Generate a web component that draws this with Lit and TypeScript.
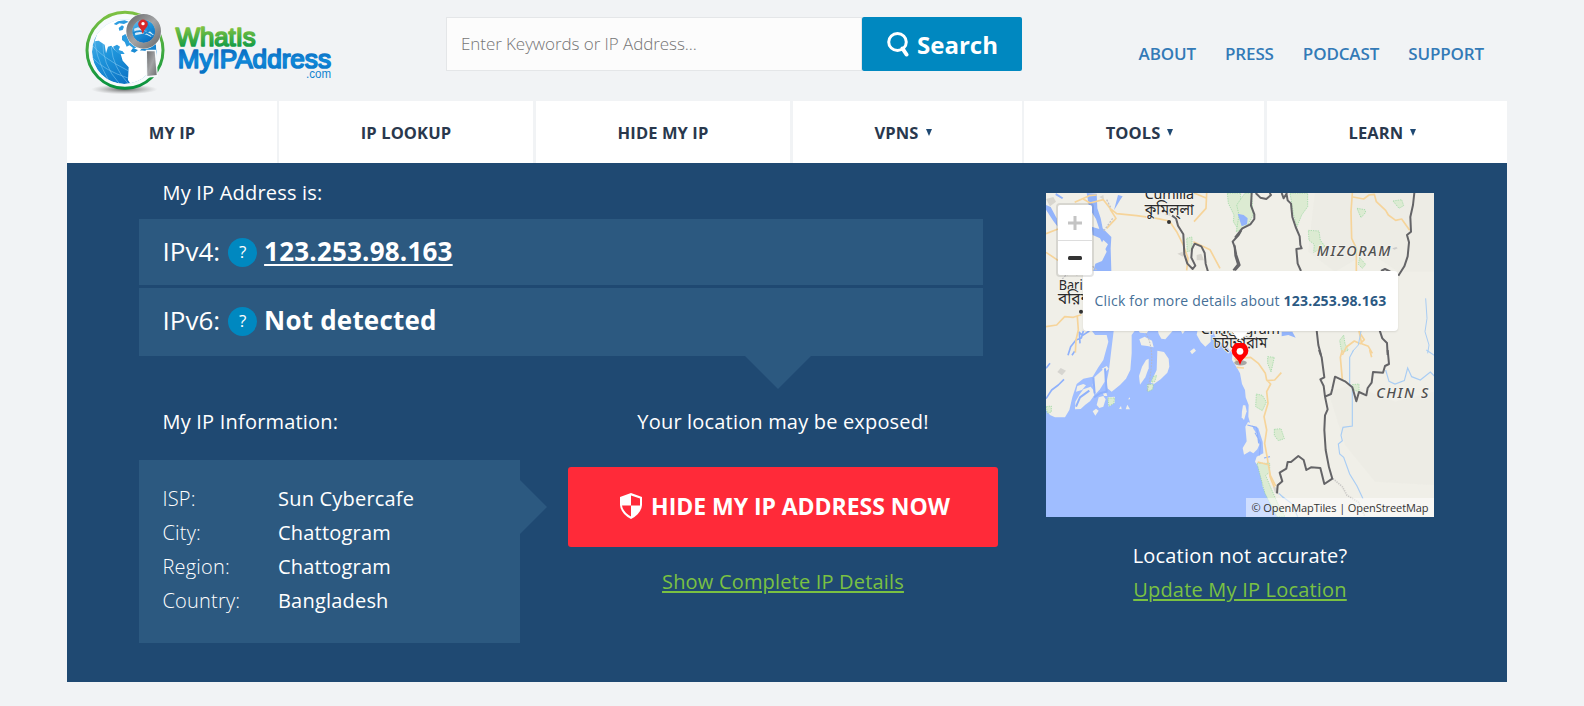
import { LitElement, html, css, svg } from "lit";
import { customElement } from "lit/decorators.js";

@customElement("site-logo")
class SiteLogo extends LitElement {
  static styles = css`
    :host { display: block; }
    .art { display: block; }
    .word { font-family: "Liberation Sans", Arial, sans-serif; stroke-linejoin: round; }
  `;
  render() {
    return html`<svg class="art" width="270" height="95" viewBox="0 0 810 285">
      <defs>
        <linearGradient id="ring" x1="0" y1="0" x2="0" y2="1"><stop offset="0" stop-color="#7dc142"/><stop offset="1" stop-color="#06923f"/></linearGradient>
        <linearGradient id="sea" x1="0" y1="0" x2="0.6" y2="1"><stop offset="0" stop-color="#6fc0ee"/><stop offset=".5" stop-color="#1f96dc"/><stop offset="1" stop-color="#0a6fc2"/></linearGradient>
        <linearGradient id="steel" x1="0" y1="0" x2="1" y2="1"><stop offset="0" stop-color="#6d6e70"/><stop offset=".5" stop-color="#a3a4a6"/><stop offset="1" stop-color="#707173"/></linearGradient>
        <linearGradient id="green" gradientUnits="userSpaceOnUse" x1="0" y1="70" x2="0" y2="130"><stop offset="0" stop-color="#7fc241"/><stop offset="1" stop-color="#0f9a47"/></linearGradient>
        <linearGradient id="blue" gradientUnits="userSpaceOnUse" x1="0" y1="136" x2="0" y2="205"><stop offset="0" stop-color="#0a6cc0"/><stop offset=".5" stop-color="#1288d8"/><stop offset="1" stop-color="#0672c4"/></linearGradient>
        <radialGradient id="shade"><stop offset="0" stop-color="#333" stop-opacity=".75"/><stop offset="1" stop-color="#777" stop-opacity="0"/></radialGradient>
        <clipPath id="disc"><circle cx="139" cy="143" r="97"/></clipPath>
      </defs>
      <ellipse cx="139" cy="256" rx="100" ry="15" fill="url(#shade)"/>
      <circle cx="141" cy="139" r="114" fill="#f6fafc" stroke="url(#ring)" stroke-width="9"/>
      <g clip-path="url(#disc)">
        <circle cx="139" cy="143" r="97" fill="url(#sea)"/>
        <g fill="none" stroke="#8ccdf2" stroke-width="1.6">
          <path d="M40 120Q70 160 150 200M42 160Q80 200 150 222M50 85Q45 150 95 235M75 110Q70 180 125 240M100 130Q105 190 150 238"/>
        </g>
        <path fill="#fff" d="M58 88L76 62L100 47L150 43L190 60L200 125L185 140L165 132L158 142L170 146L180 138L205 141L212 215L178 238L160 244L150 228L152 190L134 170L128 150L112 140L100 125L90 128L84 148L80 122L62 110L50 112Z"/>
        <g fill="#2b9ce0">
          <path d="M107 60L120 52L140 49L152 53L138 60L124 58L115 63ZM122 72L132 64L138 68L134 78L124 80ZM132 96L142 90L150 102L157 122L146 128L140 114L132 108ZM105 128L117 122L126 128L122 138L134 142L140 150L124 150L112 140Z"/>
          <path d="M150 120L162 114L178 128L168 134Z" />
        </g>
      </g>
      <circle cx="197" cy="82" r="53" fill="#f6fafc"/>
      <circle cx="197" cy="82" r="35" fill="url(#sea)"/>
      <path d="M168 74L180 70L200 80L218 82L228 92L218 98L206 92L190 90L172 94Z" fill="#d5ecf9"/>
      <path d="M164 88Q190 70 230 100M178 112Q190 90 226 74M206 50Q212 80 228 90" fill="none" stroke="#1a86d0" stroke-width="5"/>
      <circle cx="197" cy="82" r="43" fill="none" stroke="url(#steel)" stroke-width="18"/>
      <path d="M194 90Q191 76 183 68A14 14 0 1 1 207 68Q198 76 194 90Z" fill="#d8282a"/><circle cx="195" cy="59" r="5" fill="#fff"/>
      <path d="M203 137H234L240 218L204 221Z" fill="#f6fafc"/>
      <path d="M207 142L230 142L236 213L208 216Z" fill="url(#steel)"/>
      <text class="word" x="293" y="127" font-size="75" textLength="240" lengthAdjust="spacingAndGlyphs" fill="url(#green)" stroke="url(#green)" stroke-width="5">WhatIs</text>
      <text class="word" x="299" y="193" font-size="76" textLength="460" lengthAdjust="spacingAndGlyphs" fill="url(#blue)" stroke="url(#blue)" stroke-width="5">MyIPAddress</text>
      <text class="word" x="684" y="222" font-size="36" textLength="75" lengthAdjust="spacingAndGlyphs" fill="#0f83d0">.com</text>
    </svg>`;
  }
}

// The drawing uses three units per screen pixel; each group is shifted to its own sheet origin.
const mapArt = svg`
  <rect width="1164" height="972" fill="#f0efe8"/>
  <g transform="translate(567,-24)" fill="#e9e9e2">
    <path d="M240 24H597V260H490L400 200L300 260L220 200Z" opacity=".5"/>
    <path d="M280 620L350 600L480 650L597 620V900L420 890L330 780Z" opacity=".4"/>
  </g>
  <g transform="translate(-18,351)">
    <path fill="#9fbdff" d="M18 300L30 315L45 322L75 322L88 300L97 262L110 222L130 206L158 200L175 172L190 150L205 95L200 75L165 75L150 55L150 0H520L520 66L530 90L560 110L577 130L576 150L590 172L600 190L606 222L615 240L617 262L626 285L625 320L632 345L655 355L668 395L670 430L650 440L645 455L662 480L668 530L680 555L700 590L722 621H18Z"/>
    <g fill="#f0efe8">
      <path d="M222 55L290 55L275 75L275 130L271 180L258 206L240 225L215 245L202 235L200 215L207 180L214 120Z"/>
      <path d="M105 298L106 275L118 254L130 238L152 230L160 240L163 256L150 274L136 284L122 297Z"/>
      <path d="M163 202L178 188L196 172L194 215L180 238L167 252L158 225Z"/><path d="M170 285L176 262L190 258L197 268L190 290L178 294ZM158 304L168 296L176 302L166 317Z"/>
      <path d="M108 245L112 228L130 222L138 226L126 240ZM185 176L200 168L206 176L196 186ZM188 248L198 246L202 258L192 258Z"/>
      <path d="M203 262L224 260L224 278L206 290Z"/>
      <path d="M300 224L297 198L306 170L318 150L326 146L326 175L316 202Z"/>
      <path d="M352 122L372 126L386 146L388 170L382 188L362 208L342 222L332 218L350 180Z"/>
      <path d="M298 88L314 80L336 92L341 112L322 108L304 106Z"/><path d="M290 55H330L320 70L300 68ZM352 55H405L376 88L364 86L356 72ZM418 55H440L428 72Z"/>
      <path d="M450 124L462 115L468 122L456 133ZM474 55H512L512 95L496 110L482 96L470 74Z"/>
      <path d="M237 296L243 288L245 298ZM257 298L262 284L270 298ZM264 268L270 262V268Z"/>
      <path d="M606 304L609 286L616 286L620 304L612 330L605 322Z"/>
      <path d="M616 350L624 336L634 340L640 356L652 374L658 404L652 418L640 430L630 424L612 434L608 414L620 394Z"/>
    </g>
    <g fill="none" stroke="#8fb1fb" stroke-width="6" stroke-linejoin="round">
      <path d="M18 266L35 240L55 225L72 208M84 136L92 110L108 90L124 84L130 63M18 175L30 160M96 136L104 124M118 66L120 100M148 63L128 76L116 66" stroke-width="5"/>
      <path d="M108 290L120 262L148 242M160 202L164 250M195 175L200 245L180 250L162 262"/>
      <path d="M622 345L650 352L656 400M645 368L662 398L658 436M672 444L690 440" stroke-width="3.5"/>
    </g>
    <path d="M52 186L62 174L78 182L66 196Z" fill="#d6d5d0"/>
    <g fill="#dcebd2" stroke="#8fd598" stroke-width="2" stroke-dasharray="4 3"><path d="M204 264H224L221 280L207 289ZM322 224L340 222L338 238L324 245ZM340 200L350 196L344 215L334 216ZM19 290L34 288L34 306L22 310Z"/></g>
    <path d="M318 70Q340 110 334 170T320 245" fill="none" stroke="#b8b8c2" stroke-width="3" stroke-dasharray="5 4"/>
    <g fill="none" stroke="#f6d49a" stroke-width="5" stroke-linejoin="round">
      <path d="M18 50L50 45L74 20L100 22L124 14M112 20L115 60L108 90L106 128"/>
      <path d="M590 172L612 174M584 145L594 160M610 144L632 142L655 160L676 190L680 210L692 222L680 245L684 280L672 320L680 360L674 400L682 444L690 500L706 540M680 212L704 210L724 188"/>
    </g>
  </g>
  <g transform="translate(-18,-24)">
    <path fill="#93b4fb" d="M140 24L170 26L172 70L182 100L188 130L214 156L212 190L214 258L160 258L166 236L186 228L200 200L190 180L180 160L158 150L155 125L178 132L168 102L148 70ZM18 60L32 66L50 100L52 124L40 108L18 74ZM48 24L70 38L66 42L46 30ZM222 76L240 46L248 34L234 30Z"/>
    <path d="M190 165L204 178L194 196L180 184Z" fill="#f0efe8"/>
    <g fill="#d8d6cf"><path d="M18 42L40 36L48 50L30 64ZM178 36L190 30L192 44ZM412 206L428 200L430 216ZM470 210L484 206L492 226L470 226ZM374 90L388 76L392 92Z"/></g>
    <g fill="none" stroke="#f6d49a" stroke-width="5" stroke-linejoin="round">
      <path d="M130 42L150 54L190 44L210 70L230 86L290 92L350 100L388 108L410 140L430 180L444 220L440 256M18 146L54 132M18 202L54 226M104 52L148 32L170 30M210 72L228 100L200 130M460 170L510 194L540 250M500 24L498 70L462 110M462 24L500 40"/>
    </g>
    <path d="M60 290L76 272L92 264L112 270M158 244L170 256M200 44L212 68M218 100L190 140" fill="none" stroke="#c4c3c5" stroke-width="4" stroke-dasharray="6 4"/>
    <path d="M440 160L456 156L456 196L442 200ZM562 24L602 24V145L580 110L582 90L565 55Z" fill="#dcebd2" stroke="#8fd598" stroke-width="2" stroke-dasharray="4 3"/>
    <path d="M396 92L408 100L414 122L430 148L433 208L442 236L458 252L466 242L454 218L456 192L464 176L484 184L494 204L497 236L504 260M604 136L596 150L578 170L584 186L586 212L594 238L580 256" fill="none" stroke="#646467" stroke-width="6" stroke-linejoin="round"/>
    <circle cx="387" cy="111" r="6" fill="#333"/><circle cx="123" cy="380" r="6" fill="#333"/>
  </g>
  <g transform="translate(567,-24)">
    <g fill="#dcebd2" stroke="#8fd598" stroke-width="2" stroke-dasharray="4 3">
      <path d="M4 140L12 90L5 60L30 24H50L54 90L40 118L22 130ZM165 24H218V65L200 90L186 125L176 90ZM220 136L252 138L256 166L270 184L236 202L238 178L222 166ZM366 70L390 74L392 82L378 98ZM474 48L500 44L506 62L492 70ZM374 218L392 238L382 250L370 238ZM314 466L326 450L330 476L340 496L320 502Z"/>
    </g>
    <path d="M8 86L26 90L38 100L36 118L20 124ZM140 440H172L182 458L160 450L140 454Z" fill="#93b4fb"/>
    <g fill="none" stroke="#f6d49a" stroke-width="5" stroke-linejoin="round">
      <path d="M352 24L348 80L350 160L364 190L364 258M354 36L386 42L402 30L418 28L424 50L452 76L460 90L482 106L500 102L524 136M322 510L334 486L358 468L376 476L388 464L372 440M372 438L380 476L400 484L412 505"/>
    </g>
    <path d="M572 340L576 400L570 440L582 480L578 505M378 438L370 480L352 500" fill="none" stroke="#a9cdf4" stroke-width="3"/>
    <path d="M50 24L48 62L58 88L58 102L46 118L22 130L0 158M-2 180L4 210L14 240L0 256M62 24L76 38L94 42L108 30L104 24M154 24L158 46L168 56L172 96L182 126L194 154L196 180L200 190L184 192L188 236L198 258M140 24L146 40L156 24M538 24L534 60L526 96L528 140L516 150L522 172L518 214L508 244L490 272M438 258L450 252L466 260M245 436L250 480L258 510M434 436L442 460L456 474L458 510" fill="none" stroke="#646467" stroke-width="6" stroke-linejoin="round"/>
    <path d="M472 190L484 186L488 190L478 194Z" fill="#ccc"/>
  </g>
  <g transform="translate(567,471)">
    <g fill="#dcebd2" stroke="#8fd598" stroke-width="2" stroke-dasharray="4 3">
      <path d="M98 20L118 22L108 66L98 40ZM64 132L82 136L94 156L82 182L62 170ZM118 238L138 236L148 266L130 272L118 256ZM352 104L372 102L372 126L354 118ZM66 340L104 340L104 366L92 376L106 410L128 460L150 500H126L90 430Z"/>
    </g>
    <path d="M114 410L126 414L132 434L120 428Z" fill="#d6d5d0"/>
    <path d="M68 336L100 344L106 376L122 408M322 0L316 22L322 88M404 0L410 22" fill="none" stroke="#f6d49a" stroke-width="5"/>
    <path d="M356 0L344 22L344 104L352 110V228L324 232L318 256L322 272L310 282L314 312L326 322L344 372L366 408L384 446M452 60L462 94L480 102L508 92L518 54L530 80L556 90L586 66L598 78M574 0L598 16M132 430L146 444M140 438L172 462L188 500" fill="none" stroke="#a9cdf4" stroke-width="3.5"/>
    <path d="M294 386L322 410L336 436L370 456L390 500" fill="none" stroke="#cbcac7" stroke-width="5" stroke-dasharray="4 3"/>
    <path d="M252 0L260 22L268 82L256 88L266 108L270 140L278 178L270 196L268 240L272 300L282 352L292 386L268 402L256 354L228 352L214 360L206 330L190 318L168 336L158 336L154 356L134 368L142 394L128 406L126 430M270 140L288 132L292 116L300 80L330 94L352 112L364 154L372 126L394 136L398 114L410 98L414 66L444 68L450 48L462 42L458 0" fill="none" stroke="#646467" stroke-width="6" stroke-linejoin="round"/>
  </g>
  <g class="label">
    <text x="296" y="19" textLength="148">Cumilla</text><text x="296" y="65" class="bn" textLength="148" lengthAdjust="spacingAndGlyphs">কুমিল্‌লা</text>
    <text x="38" y="290" textLength="122" lengthAdjust="spacingAndGlyphs">Barisal</text><text x="36" y="333" class="bn">বরিশাল</text>
    <text x="464" y="422" textLength="238">Chattogram</text><text x="502" y="466" class="bn" textLength="162" lengthAdjust="spacingAndGlyphs">চট্‌টগ্‌রাম</text>
    <text class="state" x="812" y="190" textLength="222">MIZORAM</text><text class="state" x="991" y="614" textLength="156">CHIN S</text>
  </g>`;

@customElement("ip-map")
class IpMap extends LitElement {
  static styles = css`
    :host { display: block; position: relative; width: 388px; height: 324px; overflow: hidden; }
    .canvas { display: block; width: 388px; height: 324px; }
    .label { font-family: "Noto Sans", "Noto Sans Bengali", sans-serif; font-size: 43px; fill: #2a2a2a; paint-order: stroke; stroke: #f4f3ee; stroke-width: 5px; }
    .bn { font-size: 46px; }
    .state { font-style: italic; font-weight: 500; font-size: 43px; fill: #505050; }
    .zoom { position: absolute; left: 10px; top: 10px; width: 34px; border: 2px solid rgba(0,0,0,.1); border-radius: 4px; background: #fff; background-clip: padding-box; }
    .key { height: 35px; display: grid; place-items: center; }
    .key + .key { border-top: 1px solid #ddd; height: 34px; }
    .popup { position: absolute; left: 37px; top: 78px; width: 315px; height: 60px; border-radius: 4px; background: #fff; color: #456f97; font-size: 14px; letter-spacing: .2px; line-height: 60px; text-align: center; white-space: nowrap; box-shadow: 0 1px 2px rgba(0,0,0,.1); }
    .popup b { color: #2b5983; }
    .tip { position: absolute; left: 184px; top: 137px; border: 10px solid transparent; border-top-color: #fff; border-bottom: 0; }
    .pin { position: absolute; left: 185px; top: 150px; }
    .credit { position: absolute; right: 0; bottom: 0; width: 188px; height: 19px; background: rgba(255,255,255,.5); color: #333; font: 11px/20px "Open Sans", sans-serif; letter-spacing: -.08px; text-align: center; white-space: nowrap; }
  `;
  render() {
    return html`<svg class="canvas" viewBox="0 0 1164 972">${mapArt}</svg>
      <div class="tip"></div>
      <svg class="pin" width="18" height="23" viewBox="0 0 17 22"><ellipse cx="9" cy="19" rx="6" ry="2.5" fill="#777" opacity=".6"/><path d="M8.5 21Q7.5 17 3 13A8 8 0 1 1 14 13Q9.500 17 8.500 21Z" fill="#f00"/><circle cx="8.500" cy="8" r="3.200" fill="#fff"/></svg>
      <div class="popup">Click for more details about <b>123.253.98.163</b></div>
      <div class="zoom">
        <div class="key"><svg width="14" height="14"><path d="M7 0V14M0 7H14" stroke="#c4c4c4" stroke-width="3"/></svg></div>
        <div class="key"><svg width="14" height="4"><rect width="14" height="4" rx="1.500" fill="#333"/></svg></div>
      </div>
      <div class="credit">© OpenMapTiles | OpenStreetMap</div>`;
  }
}

@customElement("app-root")
class AppRoot extends LitElement {
  static styles = css`
    :host { display: block; height: 706px; overflow: hidden; background: #f1f3f5; font-family: "Open Sans", sans-serif; color: #fff; }
    .page { width: 1440px; margin-left: 67px; }
    .header { height: 101px; display: flex; align-items: flex-start; }
    .logo { margin: 4px 98px 0 11px; }
    .search { display: flex; margin-top: 17px; width: 576px; height: 54px; }
    .field { box-sizing: border-box; width: 416px; height: 54px; padding-left: 14px; border: 1px solid #e4e6e8; background: #fcfcfc; color: #757575; font-size: 17px; letter-spacing: -.07px; font-weight: 300; line-height: 52px; }
    .go { width: 160px; background: #0088c0; border-radius: 2px; font-size: 24px; font-weight: 700; line-height: 53px; display: flex; align-items: center; justify-content: center; gap: 8px; padding-left: 1px; box-sizing: border-box; }
    .links { margin-left: auto; margin-right: 23px; display: flex; gap: 29px; padding-top: 42px; font-size: 17px; letter-spacing: -.13px; font-weight: 600; line-height: 24px; color: #337ab7; }
    .nav { display: grid; grid-template-columns: 212px 257px 257px 231px 243px 240px; height: 62px; }
    .item { background: #fff; border-right: 3px solid #f1f3f5; display: flex; align-items: center; justify-content: center; color: #29384d; font-size: 16.500px; font-weight: 700; letter-spacing: .1px; gap: 7px; }
    .item:first-child, .item:nth-child(4) { border-right-width: 2px; }
    .item:last-child { border-right: 0; }
    .caret { border: 3.500px solid transparent; border-top: 7px solid #1f4973; border-bottom: 0; margin-right: 9px; }
    .panel { height: 519px; background: #1f4972; display: grid; grid-template-columns: 907px 388px; padding-left: 72px; box-sizing: border-box; }
    .title { padding-left: 23.500px; height: 56px; line-height: 59px; font-size: 20px; letter-spacing: .2px; }
    .row { width: 844px; height: 66px; padding: 0 0 2px 23.500px; box-sizing: border-box; background: #2c5980; margin-bottom: 3px; display: flex; align-items: center; font-size: 26px; line-height: 62px; }
    .row.last { height: 68px; margin: 0; padding-bottom: 4px; }
    .row b { font-weight: 700; letter-spacing: .2px; }
    .row u { text-decoration-thickness: 2px; text-underline-offset: 3px; }
    .help { width: 29px; height: 29px; border-radius: 50%; background: #0088c0; font-size: 17px; font-weight: 500; line-height: 28px; text-align: center; margin: 3px 7px 0 8px; }
    .down { width: 0; margin-left: 606px; border: 33px solid transparent; border-top-color: #2c5980; border-bottom: 0; }
    .lower { display: flex; }
    .left { width: 429px; }
    .left .title { height: 71px; line-height: 65px; }
    .info { display: flex; align-items: flex-start; }
    .facts { width: 381px; height: 183px; box-sizing: border-box; background: #2c5980; padding: 22px 23.500px; display: grid; grid-template-columns: 115.500px 1fr; grid-auto-rows: 34px; font-size: 20px; line-height: 34px; letter-spacing: .2px; }
    .facts .k { font-weight: 300; letter-spacing: .2px; }
    .side { margin-top: 20px; border: 27px solid transparent; border-left-color: #2c5980; border-right: 0; }
    .mid { width: 430px; text-align: center; font-size: 20px; letter-spacing: .18px; }
    .warn { height: 78px; line-height: 65px; }
    .cta { height: 80px; border-radius: 3px; background: #ff2a39; font-size: 23px; letter-spacing: -.04px; font-weight: 700; display: flex; align-items: center; justify-content: center; gap: 9px; white-space: nowrap; padding-left: 4px; box-sizing: border-box; }
    .cta span { padding-bottom: 3px; }
    .cta svg { margin-bottom: 3px; }
    .green { color: #7ac142; text-decoration: underline; text-decoration-thickness: 2px; text-underline-offset: 2px; }
    .more { line-height: 70px; }
    .right { padding-top: 30px; text-align: center; font-size: 20px; line-height: 34px; letter-spacing: .2px; }
    .note { padding-top: 22px; }
  `;
  render() {
    const nav = [["MY IP", 0], ["IP LOOKUP", 0], ["HIDE MY IP", 0], ["VPNS", 1], ["TOOLS", 1], ["LEARN", 1]];
    const facts = [["ISP:", "Sun Cybercafe"], ["City:", "Chattogram"], ["Region:", "Chattogram"], ["Country:", "Bangladesh"]];
    return html`<div class="page">
      <header class="header">
        <site-logo class="logo"></site-logo>
        <div class="search">
          <div class="field">Enter Keywords or IP Address...</div>
          <div class="go"><svg width="22" height="25" viewBox="0 0 22 25" fill="none" stroke="#fff"><ellipse cx="10.500" cy="10" rx="8.800" ry="8.500" stroke-width="3"/><path d="M15.500 16.500L19.500 22.500" stroke-width="4" stroke-linecap="round"/></svg><span>Search</span></div>
        </div>
        <nav class="links"><span>ABOUT</span><span>PRESS</span><span>PODCAST</span><span>SUPPORT</span></nav>
      </header>
      <nav class="nav">${nav.map(([t, c]) => html`<div class="item"><span>${t}</span>${c ? html`<i class="caret"></i>` : ""}</div>`)}</nav>
      <main class="panel">
        <section>
          <div class="title">My IP Address is:</div>
          <div class="row"><span>IPv4:</span><span class="help">?</span><b><u>123.253.98.163</u></b></div>
          <div class="row last"><span>IPv6:</span><span class="help">?</span><b>Not detected</b></div>
          <div class="down"></div>
          <div class="lower">
            <div class="left">
              <div class="title">My IP Information:</div>
              <div class="info">
                <div class="facts">${facts.map(([k, v]) => html`<span class="k">${k}</span><span>${v}</span>`)}</div>
                <div class="side"></div>
              </div>
            </div>
            <div class="mid">
              <div class="warn">Your location may be exposed!</div>
              <div class="cta"><svg width="22" height="26" viewBox="0 0 22 26"><path d="M11 0L22 4V12Q21 21 11 26Q1 21 0 12V4Z" fill="#fff"/><path d="M11 2.500L20 5.500V12.500H11ZM11 12.500V23.500Q3 19 2 12.500Z" fill="#ff2a39"/></svg><span>HIDE MY IP ADDRESS NOW</span></div>
              <div class="more"><span class="green">Show Complete IP Details</span></div>
            </div>
          </div>
        </section>
        <section class="right">
          <ip-map></ip-map>
          <div class="note">Location not accurate?</div>
          <div class="green">Update My IP Location</div>
        </section>
      </main>
    </div>`;
  }
}
